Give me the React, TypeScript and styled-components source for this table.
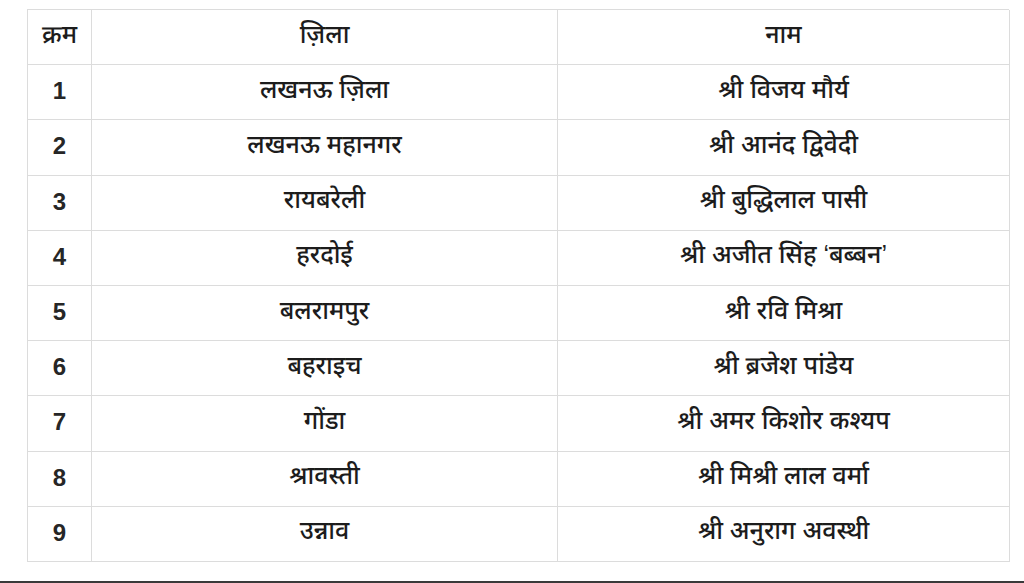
import React from 'react';
import styled, { createGlobalStyle } from 'styled-components';

const GlobalStyle = createGlobalStyle`
  html, body {
    margin: 0;
    padding: 0;
    background: #ffffff;
  }
  body {
    font-family: 'Liberation Sans', 'Noto Sans Devanagari', 'Lohit Devanagari', 'Noto Sans', sans-serif;
    color: #1c1c1c;
  }
`;

const rows = [
  ['1', 'लखनऊ ज़िला', 'श्री विजय मौर्य'],
  ['2', 'लखनऊ महानगर', 'श्री आनंद द्विवेदी'],
  ['3', 'रायबरेली', 'श्री बुद्धिलाल पासी'],
  ['4', 'हरदोई', 'श्री अजीत सिंह ‘बब्बन’'],
  ['5', 'बलरामपुर', 'श्री रवि मिश्रा'],
  ['6', 'बहराइच', 'श्री ब्रजेश पांडेय'],
  ['7', 'गोंडा', 'श्री अमर किशोर कश्यप'],
  ['8', 'श्रावस्ती', 'श्री मिश्री लाल वर्मा'],
  ['9', 'उन्नाव', 'श्री अनुराग अवस्थी'],
];

function App() {
  return (
    <Page>
      <GlobalStyle />
      <Table>
        <Cell>क्रम</Cell>
        <Cell>ज़िला</Cell>
        <Cell>नाम</Cell>
        {rows.map(r => (
          <React.Fragment key={r[0]}>
            <Cell $num>{r[0]}</Cell>
            <Cell>{r[1]}</Cell>
            <Cell>{r[2]}</Cell>
          </React.Fragment>
        ))}
      </Table>
      <BottomRule />
    </Page>
  );
}

export default App;

const Page = styled.div`
  width: 1024px;
  height: 583px;
  padding: 9px 0 0 27px;
  box-sizing: border-box;
  display: flex;
  flex-direction: column;
`;

const Table = styled.div`
  display: grid;
  grid-template-columns: 64px 466px 452px;
  grid-auto-rows: 55.2px;
  width: 982px;
  border-top: 1.5px solid #dcdcdc;
  border-left: 1.5px solid #dcdcdc;
  box-sizing: border-box;
`;

const Cell = styled.div<{ $num?: boolean }>`
  display: flex;
  align-items: center;
  justify-content: center;
  border-right: 1.5px solid #dcdcdc;
  border-bottom: 1.5px solid #dcdcdc;
  font-size: ${p => (p.$num ? '24px' : '25px')};
  font-weight: ${p => (p.$num ? 700 : 500)};
  color: ${p => (p.$num ? '#262626' : '#1c1c1c')};
  padding-bottom: 2px;
`;

const BottomRule = styled.div`
  margin: 19px 0 0 -27px;
  height: 2px;
  background: #3a3a3a;
`;
